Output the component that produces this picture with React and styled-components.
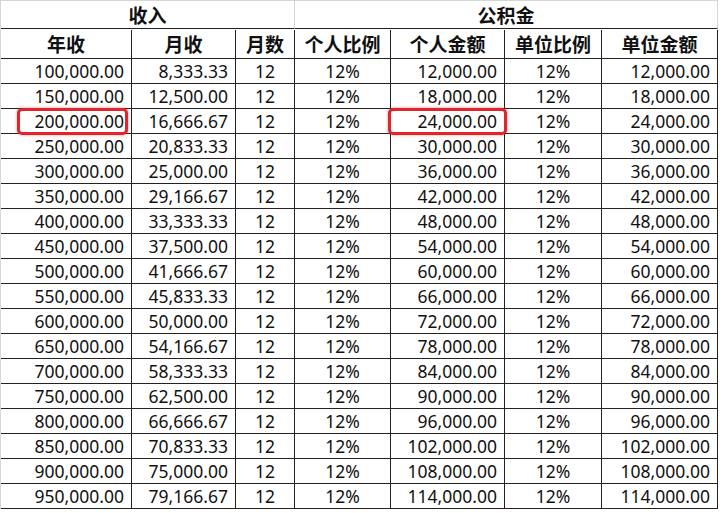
import React from "react";
import styled, { createGlobalStyle, css } from "styled-components";

const GlobalStyle = createGlobalStyle`
  html, body {
    margin: 0;
    padding: 0;
    background: #ffffff;
  }
  body {
    font-family: "Noto Sans", "Open Sans", "Noto Sans CJK SC", sans-serif;
    color: #111111;
  }
`;

const Sheet = styled.div`
  display: grid;
  grid-template-columns: 131px 104px 59px 96px 114px 97px 116px;
  grid-template-rows: 29px 29px;
  grid-auto-rows: 25px;
  width: 717px;
  border-top: 1px solid #d6d6d6;
  border-left: 1px solid #d6d6d6;
`;

const headText = css`
  box-sizing: border-box;
  display: flex;
  align-items: center;
  justify-content: center;
  border-bottom: 1px solid #222222;
  font-family: "Noto Sans CJK SC", sans-serif;
  font-weight: 700;
  font-size: 19px;
  padding-bottom: 1px;
`;

const GroupHead = styled.div`
  ${headText}
  grid-column: span ${(p) => p.$span};
  height: 28px;
  border-right: 1px solid #d6d6d6;
`;

const ColHead = styled.div`
  ${headText}
  border-right: 1px solid #222222;
`;

const markStyles = {
  inner: css`
    left: 16px;
    right: 3px;
  `,
  wide: css`
    left: -3px;
    right: -3px;
  `,
};

const Cell = styled.div`
  position: relative;
  box-sizing: border-box;
  display: flex;
  align-items: center;
  justify-content: ${(p) => (p.$align === "center" ? "center" : "flex-end")};
  padding: 0 ${(p) => (p.$align === "center" ? "0" : "7px")} 1px 0;
  border-right: 1px solid #222222;
  border-bottom: 1px solid #222222;
  font-size: 17.5px;
  white-space: nowrap;

  ${(p) =>
    p.$mark &&
    css`
      &::after {
        content: "";
        position: absolute;
        top: -1px;
        bottom: -2px;
        ${markStyles[p.$mark]}
        border: 3px solid #e0252c;
        border-radius: 5px;
        box-shadow: 0 0 3px rgba(224, 37, 44, 0.5);
        pointer-events: none;
      }
    `}
`;

const money = (n) =>
  n.toLocaleString("en-US", { minimumFractionDigits: 2, maximumFractionDigits: 2 });

const rows = Array.from({ length: 18 }, (_, i) => {
  const year = 100000 + i * 50000;
  return {
    year,
    month: Math.round((year / 12) * 100) / 100,
    count: 12,
    rate: "12%",
    personal: year * 0.12,
    company: year * 0.12,
  };
});

const headers = ["年收", "月收", "月数", "个人比例", "个人金额", "单位比例", "单位金额"];

export default function App() {
  return (
    <>
      <GlobalStyle />
      <Sheet>
        <GroupHead $span={3}>收入</GroupHead>
        <GroupHead $span={4}>公积金</GroupHead>
        {headers.map((h) => (
          <ColHead key={h}>{h}</ColHead>
        ))}
        {rows.map((r, i) => (
          <React.Fragment key={r.year}>
            <Cell $mark={i === 2 ? "inner" : undefined}>{money(r.year)}</Cell>
            <Cell>{money(r.month)}</Cell>
            <Cell $align="center">{r.count}</Cell>
            <Cell $align="center">{r.rate}</Cell>
            <Cell $mark={i === 2 ? "wide" : undefined}>{money(r.personal)}</Cell>
            <Cell $align="center">{r.rate}</Cell>
            <Cell>{money(r.company)}</Cell>
          </React.Fragment>
        ))}
      </Sheet>
    </>
  );
}
